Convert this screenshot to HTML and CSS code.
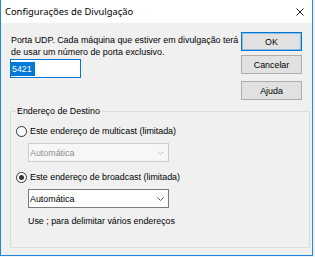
FILE: index.html
```html
<!DOCTYPE html>
<html lang="pt">
<head>
<meta charset="utf-8">
<title>Configurações de Divulgação</title>
<link rel="stylesheet" href="styles.css">
</head>
<body>
<div class="window">
  <div class="titlebar">
    <span class="title">Configurações de Divulgação</span>
    <svg class="close" width="8" height="8" viewBox="0 0 8 8"><path d="M0.5 0.5 L7.5 7.5 M7.5 0.5 L0.5 7.5" stroke="#1a1a1a" stroke-width="1" fill="none"/></svg>
  </div>
  <div class="client">
    <div class="top">
      <div class="left">
        <p class="desc">Porta UDP. Cada máquina que estiver em divulgação terá<br>de usar um número de porta exclusivo.</p>
        <div class="input"><span class="sel">5421</span></div>
      </div>
      <div class="buttons">
        <div class="btn default">OK</div>
        <div class="btn cancel">Cancelar</div>
        <div class="btn help">Ajuda</div>
      </div>
    </div>
    <fieldset class="group">
      <legend class="legend">Endereço de Destino</legend>
      <div class="radio-row first"><span class="radio"></span><span>Este endereço de multicast (limitada)</span></div>
      <div class="combo disabled"><span>Automática</span><svg class="arrow" width="7" height="4" viewBox="0 0 7 4"><path d="M0.5 0.5 L3.5 3.5 L6.5 0.5" stroke="#c4c4c4" fill="none"/></svg></div>
      <div class="radio-row second"><span class="radio checked"></span><span>Este endereço de broadcast (limitada)</span></div>
      <div class="combo"><span>Automática</span><svg class="arrow" width="7" height="4" viewBox="0 0 7 4"><path d="M0.5 0.5 L3.5 3.5 L6.5 0.5" stroke="#555" fill="none"/></svg></div>
      <p class="hint">Use ; para delimitar vários endereços</p>
    </fieldset>
  </div>
</div>
</body>
</html>
```
FILE: styles.css
```css
html, body {
  margin: 0;
  height: 100%;
}
body {
  background: #f4f4f4;
  font-family: "Liberation Sans", Arial, sans-serif;
  font-size: 8.9px;
  color: #000;
}
.window {
  width: 311px;
  height: 255px;
  border: 1px solid #1e87e0;
  border-top: 0;
  display: flex;
  flex-direction: column;
  background: #f0f0f0;
}
.titlebar {
  height: 23px;
  flex: none;
  background: #fff;
  display: flex;
  align-items: center;
  justify-content: space-between;
  padding: 0 8px 0 4px;
}
.title {
  font-family: "Noto Sans", "Open Sans", sans-serif;
  font-size: 9.4px;
  color: #000;
  margin-top: -1px;
}
.close {
  display: block;
  margin-top: 1px;
}
.client {
  flex: 1;
  padding: 9px 2px 0 9px;
}
.top {
  display: flex;
  justify-content: space-between;
  height: 68px;
}
.left {
  padding-top: 2px;
}
.desc {
  margin: 0;
  padding-left: 1px;
  line-height: 12px;
  white-space: nowrap;
}
.input {
  margin-top: 1px;
  width: 69px;
  height: 17px;
  border: 1px solid #0078d7;
  background: #fff;
  display: flex;
  align-items: center;
}
.sel {
  background: #0078d7;
  color: #fff;
  height: 14px;
  line-height: 14px;
  padding: 0 3px 0 1px;
}
.buttons {
  display: flex;
  flex-direction: column;
  width: 61px;
  margin-right: 8px;
}
.btn {
  box-sizing: border-box;
  height: 19px;
  border: 1px solid #adadad;
  background: #e1e1e1;
  display: flex;
  align-items: center;
  justify-content: center;
}
.btn.default {
  border-color: #0078d7;
  box-shadow: inset 0 0 0 1px rgba(0, 120, 215, 0.35);
}
.btn.cancel {
  margin-top: 4px;
}
.btn.help {
  margin-top: 7px;
}
.group {
  box-sizing: border-box;
  width: 300px;
  margin: 5px 0 0;
  padding: 0 0 20px 5px;
  border: 1px solid #dcdcdc;
  min-width: 0;
}
.legend {
  padding: 0 1px;
  line-height: 12px;
}
.radio-row {
  display: flex;
  align-items: center;
  height: 12px;
}
.radio-row.first {
  margin-top: 8px;
}
.radio-row.second {
  margin-top: 9px;
}
.radio {
  box-sizing: border-box;
  width: 11px;
  height: 11px;
  border: 1px solid #333;
  border-radius: 50%;
  background: #fff;
  margin-right: 3px;
  display: flex;
  align-items: center;
  justify-content: center;
}
.radio.checked::after {
  content: "";
  width: 5px;
  height: 5px;
  border-radius: 50%;
  background: #333;
}
.combo {
  box-sizing: border-box;
  width: 141px;
  height: 19px;
  margin: 6px 0 0 12px;
  border: 1px solid #7a7a7a;
  background: #fff;
  display: flex;
  align-items: center;
  justify-content: space-between;
  padding: 0 4px 0 1px;
}
.combo.disabled {
  border-color: #cccccc;
  background: #f7f7f7;
  color: #8d8d8d;
}
.arrow {
  display: block;
}
.hint {
  margin: 7px 0 0 12px;
  line-height: 12px;
}
```
